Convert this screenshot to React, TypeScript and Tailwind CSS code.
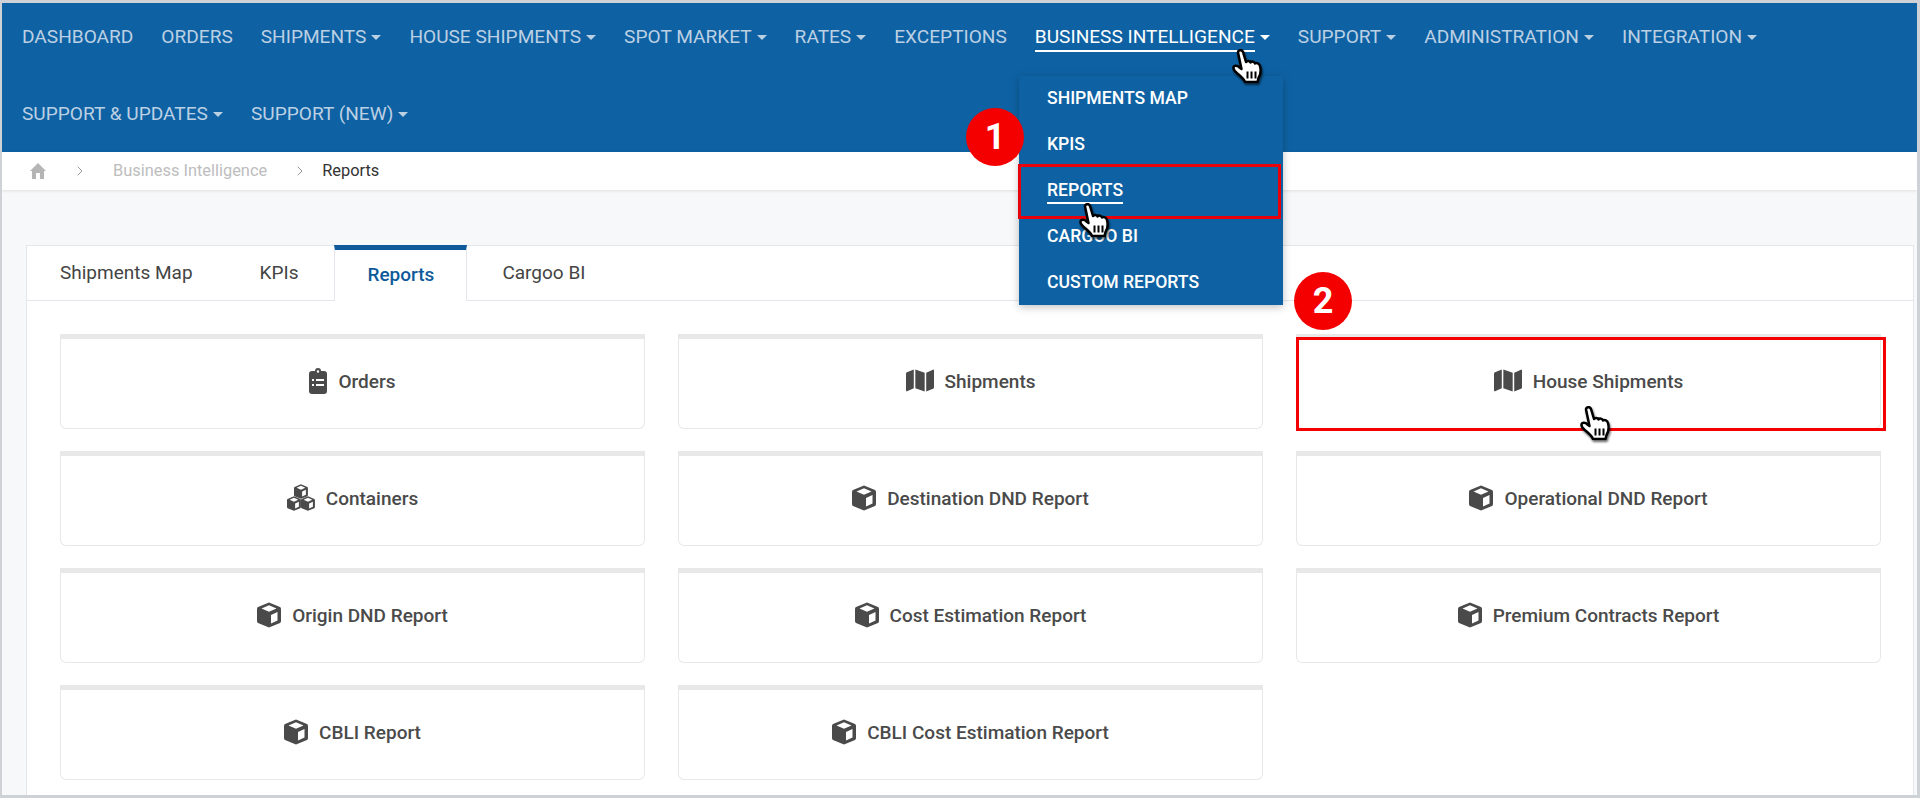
import { FaMap } from 'react-icons/fa';
import { ChevronRight } from 'lucide-react';

const firstRow = [
    { label: 'DASHBOARD' },
    { label: 'ORDERS' },
    { label: 'SHIPMENTS', caret: true },
    { label: 'HOUSE SHIPMENTS', caret: true },
    { label: 'SPOT MARKET', caret: true },
    { label: 'RATES', caret: true },
    { label: 'EXCEPTIONS' },
    { label: 'BUSINESS INTELLIGENCE', caret: true, active: true },
    { label: 'SUPPORT', caret: true },
    { label: 'ADMINISTRATION', caret: true },
    { label: 'INTEGRATION', caret: true },
];

const secondRow = [
    { label: 'SUPPORT & UPDATES', caret: true },
    { label: 'SUPPORT (NEW)', caret: true },
];

const menuItems = ['SHIPMENTS MAP', 'KPIS', 'REPORTS', 'CARGOO BI', 'CUSTOM REPORTS'];

const cubePath =
    'M12 .5 23 5Q24 5.5 24 7V19Q24 20.5 23 21L12 25.5 1 21Q0 20.5 0 19V7Q0 5.5 1 5ZM4.5 6.5 12 9.8 19.5 6.5 12 3.2ZM14 13V21.5L20.5 18.5V10Z';

function ClipboardIcon() {
    return (
        <svg viewBox="0 0 18 26" className="w-[18px] h-[26px] -mt-[4px] fill-current">
            <path
                fillRule="evenodd"
                d="M6 3a3 3 0 0 1 6 0h3a3 3 0 0 1 3 3v17a3 3 0 0 1-3 3H3a3 3 0 0 1-3-3V6a3 3 0 0 1 3-3ZM9 2.3a1.2 1.2 0 1 0 0 2.4 1.2 1.2 0 0 0 0-2.4ZM3 11v2h2v-2ZM7 11v2h8v-2ZM3 16v2h2v-2ZM7 16v2h8v-2Z"
            />
        </svg>
    );
}

function CubeIcon() {
    return (
        <svg viewBox="0 0 24 26" className="w-[24px] h-[26px] -mt-[4px] fill-current">
            <path fillRule="evenodd" d={cubePath} />
        </svg>
    );
}

function CubesIcon() {
    return (
        <svg viewBox="0 0 28 27" className="w-[28px] h-[27px] -mt-[4px] fill-current">
            <path fillRule="evenodd" transform="translate(7 0) scale(.58)" d={cubePath} />
            <path fillRule="evenodd" transform="translate(0 12) scale(.58)" d={cubePath} />
            <path fillRule="evenodd" transform="translate(14 12) scale(.58)" d={cubePath} />
        </svg>
    );
}

function MapIcon() {
    return <FaMap className="w-[28px] h-[25px] -mt-[4px]" />;
}

const reports = [
    { label: 'Orders', icon: ClipboardIcon },
    { label: 'Shipments', icon: MapIcon },
    { label: 'House Shipments', icon: MapIcon },
    { label: 'Containers', icon: CubesIcon },
    { label: 'Destination DND Report', icon: CubeIcon },
    { label: 'Operational DND Report', icon: CubeIcon },
    { label: 'Origin DND Report', icon: CubeIcon },
    { label: 'Cost Estimation Report', icon: CubeIcon },
    { label: 'Premium Contracts Report', icon: CubeIcon },
    { label: 'CBLI Report', icon: CubeIcon },
    { label: 'CBLI Cost Estimation Report', icon: CubeIcon },
];

function NavItem({ label, caret, active }: { label: string; caret?: boolean; active?: boolean }) {
    return (
        <a className={`flex items-center gap-[5px] h-[66px] ${active ? 'text-white' : 'text-[#bcd0e3]'}`}>
            <span className={`leading-[26px] border-b-2 ${active ? 'border-white' : 'border-transparent'}`}>{label}</span>
            {caret && <span className="w-0 h-0 border-x-[5px] border-x-transparent border-t-[5px] border-t-current -mt-[2px]" />}
        </a>
    );
}

function Hand({ className }: { className: string }) {
    return (
        <svg viewBox="0 0 30 34" className={`absolute w-[30px] h-[34px] drop-shadow-[1px_2px_1px_rgba(0,0,0,0.6)] ${className}`}>
            <path
                d="M6 3.5C6 1 10 0 11 3L14 13C15 11.5 18 11.5 18.5 13.5 19.5 12 22.5 12.5 23 14.5 24.5 13.5 27.5 14.5 28 17 29 21 28.5 26 26.5 29L25.5 33H13C12 30 9 27.5 6 25 4 23 1 21 1.5 18.5 2 16 5.5 16.5 7.5 18.5L9.5 20Z"
                fill="white"
                stroke="black"
                strokeWidth="2.5"
                strokeLinejoin="round"
            />
            <path d="M15.5 22.5V29.5M19.5 22.5V29.5M23.5 22.5V29.5" stroke="black" strokeWidth="2" />
        </svg>
    );
}

function Badge({ n, className }: { n: number; className: string }) {
    return (
        <div className={`absolute w-[58px] h-[58px] rounded-full bg-[#f40000] text-white text-[36px] font-bold flex items-center justify-center ${className}`}>
            {n}
        </div>
    );
}

export default function App() {
    return (
        <div className="relative w-[1920px] h-[798px] overflow-hidden border-[3px] border-l-2 border-[#ced2d7] bg-[#f7f8fa] font-['Roboto',sans-serif]">
            {/* Top nav */}
            <nav className="bg-[#0e62a3] h-[149px] pl-[20px] pt-[2px] text-[19.1px] flex flex-col gap-[11px]">
                <div className="flex gap-[28px]">
                    {firstRow.map((item) => (
                        <NavItem key={item.label} {...item} />
                    ))}
                </div>
                <div className="flex gap-[28px]">
                    {secondRow.map((item) => (
                        <NavItem key={item.label} {...item} />
                    ))}
                </div>
            </nav>

            {/* Breadcrumb */}
            <div className="h-[38px] bg-white shadow-[0_1px_3px_rgba(0,0,0,0.1)] flex items-center pl-[27px] text-[16.4px] text-[#bdbdbd]">
                <svg viewBox="0 0 18 18" className="w-[18px] h-[18px] fill-[#b5b5b5]">
                    <path d="M9 1 17 9H15V17H11V11H7V17H3V9H1Z" />
                </svg>
                <ChevronRight className="w-[16px] h-[16px] ml-[25px] text-[#999]" strokeWidth={1.5} />
                <span className="ml-[25px]">Business Intelligence</span>
                <ChevronRight className="w-[16px] h-[16px] ml-[25px] text-[#999]" strokeWidth={1.5} />
                <span className="ml-[14px] text-[#333]">Reports</span>
            </div>

            {/* Tab panel */}
            <div className="mt-[55px] ml-[24px] mr-[3px] bg-white border border-[#e3e7ec] h-[560px]">
                <div className="flex h-[55px] border-b border-[#e3e7ec] text-[19px] text-[#444]">
                    <div className="pl-[33px] pr-[34px] flex items-center">Shipments Map</div>
                    <div className="pl-[33px] pr-[36px] flex items-center">KPIs</div>
                    <div className="px-[32px] flex items-center text-[#0e5a9a] font-medium border-t-[5px] border-t-[#0e5a9a] border-x border-x-[#e3e7ec] bg-white h-[56px] -mt-px">Reports</div>
                    <div className="px-[35px] flex items-center">Cargoo BI</div>
                </div>
                <div className="grid grid-cols-3 gap-x-[33px] gap-y-[22px] pt-[33px] pl-[33px] pr-[32px]">
                    {reports.map((r) => (
                        <div key={r.label} className="h-[95px] pb-[2px] bg-white border border-[#e8e8e8] border-t-[5px] rounded-b-[6px] flex items-center justify-center gap-[11px] text-[19px] font-medium text-[#4a4a4a]">
                            <r.icon />
                            <span>{r.label}</span>
                        </div>
                    ))}
                </div>
            </div>

            {/* Dropdown */}
            <div className="absolute left-[1017px] top-[73px] w-[264px] h-[229px] bg-[#0e62a3] shadow-[0_2px_8px_rgba(0,0,0,0.25)] text-white text-[17.6px] font-medium">
                {menuItems.map((m) => (
                    <div key={m} className="h-[46px] pb-[1px] pl-[28px] flex items-center">
                        <span className={m === 'REPORTS' ? 'border-b-2 border-white leading-[24px]' : ''}>{m}</span>
                    </div>
                ))}
            </div>

            {/* Annotations */}
            <div className="absolute left-[1016px] top-[161px] w-[263px] h-[55px] border-[3px] border-[#e8000b]" />
            <div className="absolute left-[1294px] top-[334px] w-[590px] h-[94px] border-[3px] border-[#f40000]" />
            <Badge n={1} className="left-[964px] top-[105px]" />
            <Badge n={2} className="left-[1292px] top-[269px]" />
            <Hand className="left-[1230px] top-[46px]" />
            <Hand className="left-[1077px] top-[200px]" />
            <Hand className="left-[1578px] top-[403px]" />
        </div>
    );
}
